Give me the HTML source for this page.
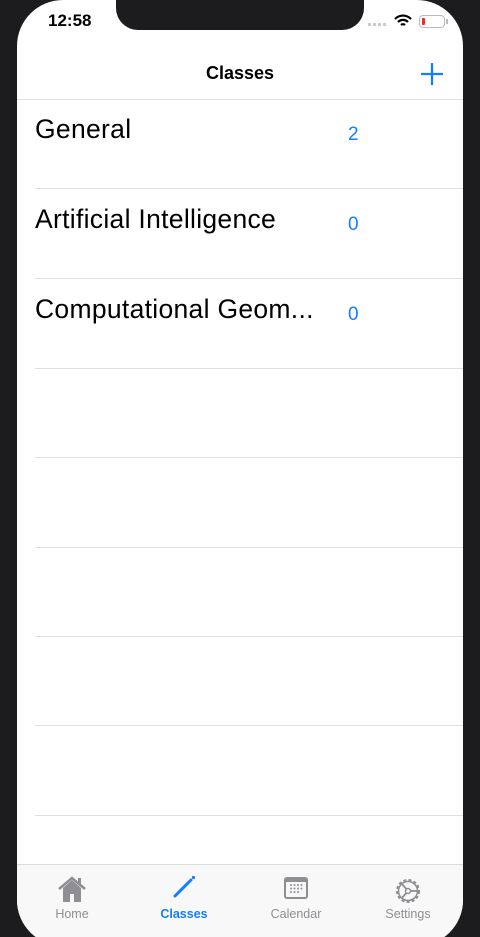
<!DOCTYPE html>
<html style="width:480px;height:937px;overflow:hidden"><head><meta charset="utf-8"><style>
*{margin:0;padding:0;box-sizing:border-box}
body{width:480px;height:937px;background:#1c1b1d;position:relative;overflow:hidden;font-family:"Liberation Sans",sans-serif}
.screen{position:absolute;left:17px;top:0;width:446px;height:946px;background:#fff;border-radius:46px;overflow:hidden}
.notch{position:absolute;left:116px;top:0;width:248px;height:30px;background:#1c1b1d;border-radius:0 0 22px 22px}
.time{position:absolute;left:48px;top:11px;font-size:17px;font-weight:bold;color:#000}
.title{position:absolute;left:0;width:480px;top:63px;text-align:center;font-size:18px;font-weight:bold;color:#000}
.sep{position:absolute;height:1px;background:#e0e0e0}
.row{position:absolute;left:35px;font-size:26.5px;letter-spacing:0.3px;color:#000}
.cnt{position:absolute;left:348px;font-size:19px;color:#147efb}
.tab{position:absolute;top:864px;left:0;width:446px;height:90px;background:#f8f8f9;border-top:1px solid #ddd}
.tl{position:absolute;top:907px;font-size:12.5px;color:#8e8e93;text-align:center;width:100px}
</style></head><body>
<div class="screen"><div class="tab"></div></div>
<div class="notch"></div>
<div class="time">12:58</div>
<div style="position:absolute;left:368px;top:23px;width:20px;height:3px;background:repeating-linear-gradient(90deg,#ccc 0 3px,transparent 3px 5px)"></div>
<svg style="position:absolute;left:394px;top:14px" width="18" height="14" viewBox="0 0 18 14"><path d="M1 5a11 11 0 0 1 16 0M4 8a7 7 0 0 1 10 0M7 11a3 3 0 0 1 4 0" stroke="#000" stroke-width="2.2" fill="none"/></svg>
<div style="position:absolute;left:419px;top:15px;width:26px;height:13px;border:1px solid #bbb;border-radius:4px"><div style="position:absolute;left:2px;top:2px;width:3px;height:7px;background:#f22;border-radius:1px"></div></div>
<div style="position:absolute;left:446px;top:19px;width:2px;height:5px;background:#bbb"></div>
<div class="title">Classes</div>
<svg style="position:absolute;left:420px;top:62px" width="24" height="24"><path d="M12 1v22M1 12h22" stroke="#147efb" stroke-width="2.3"/></svg>
<div class="sep" style="left:17px;width:446px;top:99px"></div>
<div class="row" style="top:114px">General</div><div class="cnt" style="top:124px">2</div>
<div class="sep" style="left:35px;width:428px;top:188px"></div>
<div class="row" style="top:204px">Artificial Intelligence</div><div class="cnt" style="top:214px">0</div>
<div class="sep" style="left:35px;width:428px;top:278px"></div>
<div class="row" style="top:294px">Computational Geom...</div><div class="cnt" style="top:304px">0</div>
<div class="sep" style="left:35px;width:428px;top:368px"></div>
<div class="sep" style="left:35px;width:428px;top:457px"></div>
<div class="sep" style="left:35px;width:428px;top:547px"></div>
<div class="sep" style="left:35px;width:428px;top:636px"></div>
<div class="sep" style="left:35px;width:428px;top:725px"></div>
<div class="sep" style="left:35px;width:428px;top:815px"></div>
<svg style="position:absolute;left:57px;top:875px" width="30" height="28" viewBox="0 0 30 28"><path d="M2 14L15 3l13 11" stroke="#8e8e93" stroke-width="2.5" fill="none"/><path d="M6 13v14h7v-8h4v8h7V13L15 5z" fill="#8e8e93"/><rect x="21" y="3" width="3" height="7" fill="#8e8e93"/></svg>
<svg style="position:absolute;left:172px;top:875px" width="24" height="24" viewBox="0 0 24 24"><path d="M3 21L19 5" stroke="#147efb" stroke-width="3" stroke-linecap="round"/><circle cx="21.5" cy="2.5" r="1.6" fill="#147efb"/></svg>
<svg style="position:absolute;left:283px;top:876px" width="26" height="24" viewBox="0 0 26 24"><rect x="1" y="1" width="24" height="22" rx="3" fill="#8e8e93"/><rect x="3" y="6" width="20" height="15" rx="1" fill="#f8f8f9"/><g fill="#8e8e93"><circle cx="8" cy="9" r="1"/><circle cx="11.5" cy="9" r="1"/><circle cx="15" cy="9" r="1"/><circle cx="18.5" cy="9" r="1"/><circle cx="8" cy="12.5" r="1"/><circle cx="11.5" cy="12.5" r="1"/><circle cx="15" cy="12.5" r="1"/><circle cx="18.5" cy="12.5" r="1"/><circle cx="8" cy="16" r="1"/><circle cx="11.5" cy="16" r="1"/><circle cx="15" cy="16" r="1"/></g></svg>
<svg style="position:absolute;left:393px;top:876px" width="30" height="30" viewBox="0 0 30 30"><circle cx="15" cy="15" r="11" stroke="#8e8e93" stroke-width="2" fill="none" stroke-dasharray="3 2.2"/><circle cx="15" cy="15" r="9.5" stroke="#8e8e93" stroke-width="1.5" fill="none"/><path d="M15 15L9 8M15 15L9 22M15 15h9" stroke="#8e8e93" stroke-width="1.8"/><circle cx="15" cy="15" r="2.5" stroke="#8e8e93" stroke-width="1.5" fill="#f8f8f9"/></svg>
<div class="tl" style="left:22px">Home</div>
<div class="tl" style="left:134px;color:#147efb;font-weight:bold">Classes</div>
<div class="tl" style="left:246px">Calendar</div>
<div class="tl" style="left:358px">Settings</div>
</body></html>
